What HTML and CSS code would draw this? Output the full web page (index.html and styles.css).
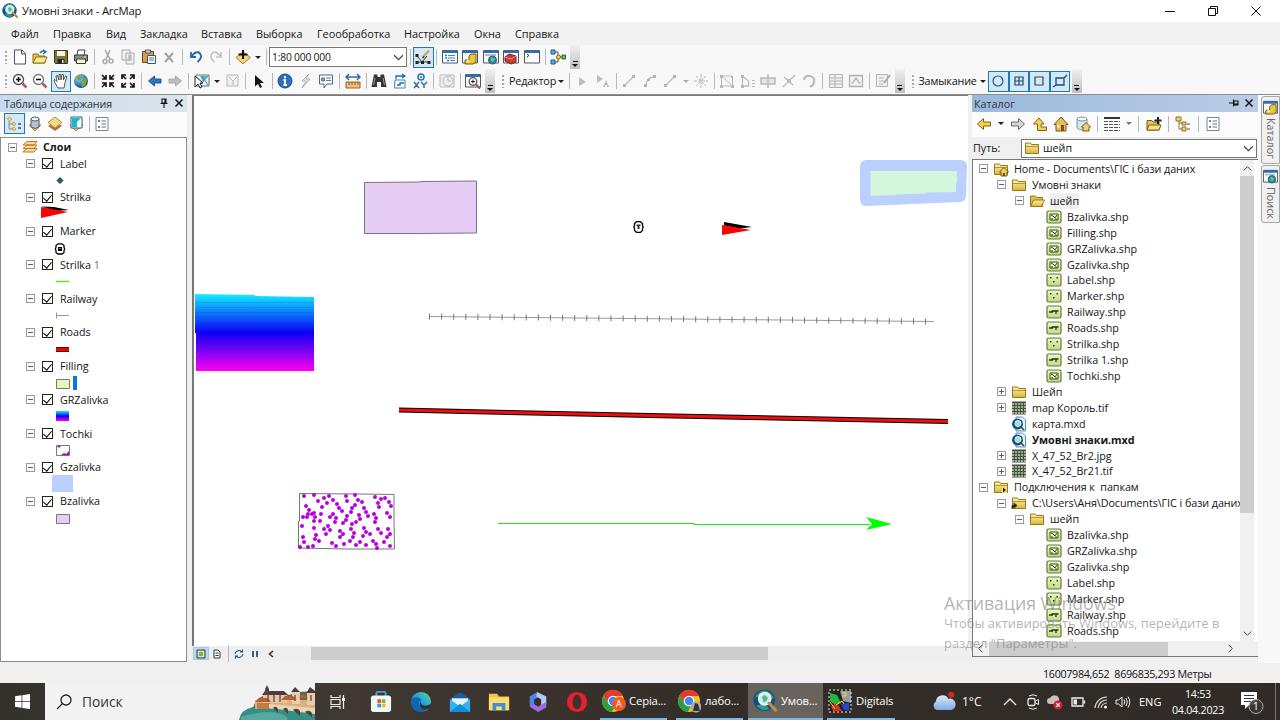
FILE: index.html
```html
<!DOCTYPE html>
<html lang="uk">
<head>
<meta charset="utf-8">
<title>Умовні знаки - ArcMap</title>
<link rel="stylesheet" href="styles.css">
</head>
<body>
<svg class="defs" width="0" height="0">
<defs>
<linearGradient id="gFold" x1="0" y1="0" x2="0" y2="1"><stop offset="0" stop-color="#fff3a8"/><stop offset="1" stop-color="#d9b638"/></linearGradient>
<linearGradient id="gShp" x1="0" y1="0" x2="0" y2="1"><stop offset="0" stop-color="#f0f8c4"/><stop offset="1" stop-color="#bfd888"/></linearGradient>
<linearGradient id="gRamp" x1="0" y1="0" x2="0" y2="1"><stop offset="0" stop-color="#10f0ff"/><stop offset=".5" stop-color="#0a00f4"/><stop offset="1" stop-color="#ff00f0"/></linearGradient>
<linearGradient id="gEdge" x1="0" y1="1" x2="1" y2="0"><stop offset="0" stop-color="#0c59a4"/><stop offset=".5" stop-color="#1b9de2"/><stop offset="1" stop-color="#5fe08a"/></linearGradient>
<linearGradient id="gCloud" x1="0" y1="0" x2="0" y2="1"><stop offset="0" stop-color="#dce9fb"/><stop offset="1" stop-color="#7ea9e6"/></linearGradient>
<radialGradient id="gGlobe" cx=".35" cy=".3" r=".8"><stop offset="0" stop-color="#b9e4f6"/><stop offset=".5" stop-color="#3d86c8"/><stop offset="1" stop-color="#0f3874"/></radialGradient>
</defs>
<symbol id="arcmap" viewBox="0 0 16 16"><circle cx="7.5" cy="7.5" r="7.2" fill="#114f7c"/><path d="M1 6q3-5 6-5 5 0 7 5l-4 1-4-3zM2 11q5 5 9 2l-4-3z" fill="#2e9c8d"/><circle cx="7.8" cy="6.5" r="4" fill="#c8ecf0" stroke="#e8f4f6" stroke-width="1.2"/><path d="M6 5l2-1 2 2-1 2-2 1z" fill="#58b78d"/><path d="M10.8 9.5l4.2 4.6" stroke="#c38b3e" stroke-width="2.2" stroke-linecap="round"/></symbol>
<symbol id="new" viewBox="0 0 16 16"><path d="M2.5 1h7.500l3.500 3.500V15h-11z" fill="#fdfeff" stroke="#4b5563"/><path d="M9.500 1v4h4" fill="#dfe7f0" stroke="#4b5563"/></symbol>
<symbol id="open" viewBox="0 0 16 16"><path d="M1 14V5h5l1 2h6v7z" fill="#e3c34e" stroke="#8d7219"/><path d="M1 14l3-6h11l-2.500 6z" fill="#fbe992" stroke="#8d7219"/><path d="M8 4q2-3 5-1.500M11 0.800l3 2-3 2" fill="none" stroke="#3173ae" stroke-width="1.400"/></symbol>
<symbol id="save" viewBox="0 0 16 16"><path d="M1.500 1.500h13v13h-12l-1-1z" fill="#7e7632" stroke="#37351c"/><path d="M4 2h8v5H4z" fill="#f6f4df"/><path d="M4.500 10h7v4.500h-7z" fill="#26272a"/><path d="M9 11h1.500v3H9z" fill="#eee"/></symbol>
<symbol id="print" viewBox="0 0 16 16"><path d="M4 6l1-5h7l-1 5" fill="#fff" stroke="#444"/><path d="M1.500 6h13v6h-13z" fill="#8b9182" stroke="#343a35"/><path d="M3.500 10h9v4.500h-9z" fill="#f5f4dd" stroke="#343a35"/><path d="M11 8h2" stroke="#ddeb83"/></symbol>
<symbol id="cut" viewBox="0 0 16 16"><path d="M5 1l5 9M10 1L6 10" stroke="#a4a4a4" stroke-width="1.500"/><circle cx="5" cy="12.500" r="2" fill="none" stroke="#aaa" stroke-width="1.500"/><circle cx="11" cy="12" r="2" fill="none" stroke="#aaa" stroke-width="1.500"/></symbol>
<symbol id="copy" viewBox="0 0 16 16"><path d="M2 1h8v10H2zM6 4h8v11H6z" fill="#f2f2f2" stroke="#a9a9a9"/><path d="M8 7h4M8 9h4M8 11h4" stroke="#aaa"/></symbol>
<symbol id="paste" viewBox="0 0 16 16"><path d="M1.500 2.500h11v11h-11z" fill="#d99a4d" stroke="#744714"/><path d="M4.500 1h5v3h-5z" fill="#d5d3cd" stroke="#555"/><path d="M6.500 6.500h8v8h-8z" fill="#fff" stroke="#3d5370"/><path d="M8 9h5M8 11h5" stroke="#4378ae"/></symbol>
<symbol id="del" viewBox="0 0 16 16"><path d="M4 4l8 9M12 4l-8 9" stroke="#a1a1a1" stroke-width="2"/></symbol>
<symbol id="undo" viewBox="0 0 16 16"><path d="M3 3v5h5" fill="none" stroke="#2569aa" stroke-width="1.800"/><path d="M3.500 7.500Q7 2 11 3.500q5 4-1.500 9.500" fill="none" stroke="#2569aa" stroke-width="2"/></symbol>
<symbol id="redo" viewBox="0 0 16 16"><path d="M13 3v5H8M12.500 7.500Q9 2 5 3.500q-5 4 1.500 9.500" fill="none" stroke="#c4c4c4" stroke-width="1.700"/></symbol>
<symbol id="adddata" viewBox="0 0 16 16"><path d="M1 8.500L8 3l7.500 5.500L8 14.800z" fill="#f4d478" stroke="#9e8129"/><path d="M8 1v9M3.500 5.500h9" stroke="#101010" stroke-width="2"/></symbol>
<symbol id="edit" viewBox="0 0 16 16"><path d="M2 7l5 6 5-6M2 13h12" stroke="#333" fill="none"/><path d="M.5 5h3v3h-3zM.5 12h3v3h-3zM6 12h3v3H6zM12.500 12h3v3h-3z" fill="#222"/><path d="M8.500 7.500l5.500-6" stroke="#c9a94a" stroke-width="2.200"/><path d="M7.500 9l1.500-1.500" stroke="#222" stroke-width="1.500"/></symbol>
<symbol id="win" viewBox="0 0 16 16"><path d="M.5 1.500h15v12.500H.5z" fill="#fbfcfd" stroke="#4f5865"/><path d="M1 1h14v3H1z" fill="#386ba6"/></symbol>
<symbol id="toc" viewBox="0 0 16 16"><use href="#win"/><path d="M3 6.500h2M3 9h2M5 11.500h2" stroke="#287bc0" stroke-width="1.500"/><path d="M6 6.500h7M6 9h7M8 11.500h5" stroke="#4488ba"/></symbol>
<symbol id="catalog" viewBox="0 0 16 16"><use href="#win"/><path d="M9 5h5v8l-3 2H3v-4h4V7z" fill="#eac638" stroke="#725b13"/><circle cx="6" cy="12" r="1.500" fill="#fff09d"/></symbol>
<symbol id="search" viewBox="0 0 16 16"><use href="#win"/><path d="M2 6h11" stroke="#abc0d0" stroke-width="2"/><circle cx="9.500" cy="11" r="4" fill="#258ba6" stroke="#27647d"/><path d="M8 8l4 2-2 3-2-1z" fill="#77c375"/></symbol>
<symbol id="toolbox" viewBox="0 0 16 16"><use href="#win"/><path d="M2 8l4-3 7 2v6l-5 2-6-3z" fill="#c93d30" stroke="#7c221b"/><path d="M2 8l6 2 5-3" fill="none" stroke="#f29a83"/></symbol>
<symbol id="python" viewBox="0 0 16 16"><use href="#win"/><path d="M3 5l2 1.500L3 8" stroke="#333" fill="none"/></symbol>
<symbol id="model" viewBox="0 0 16 16"><path d="M5 3h3v10H5M8 8h5" fill="none" stroke="#555"/><path d="M1 1h4v4H1zM1 11h4v4H1z" fill="#5fb0e8" stroke="#175589"/><circle cx="8.500" cy="8" r="2" fill="#f4d549" stroke="#7e6915"/><path d="M12 6h3.500v4H12z" fill="#6fb966" stroke="#2c6e28"/></symbol>
<symbol id="zin" viewBox="0 0 16 16"><circle cx="6.500" cy="6.500" r="5" fill="#fff" stroke="#4d4d4d" stroke-width="1.300"/><path d="M4 6.500h5M6.500 4v5" stroke="#111" stroke-width="1.600"/><path d="M10.500 10.500l4 4" stroke="#a6615d" stroke-width="2.500"/></symbol>
<symbol id="zout" viewBox="0 0 16 16"><circle cx="6.500" cy="6.500" r="5" fill="#fff" stroke="#777" stroke-width="1.300"/><path d="M4 6.500h5" stroke="#111" stroke-width="1.600"/><path d="M10.500 10.500l4 4" stroke="#a6615d" stroke-width="2.500"/></symbol>
<symbol id="hand" viewBox="0 0 16 16"><path d="M5 15L2 10l-1-3 1-.500 2 2L3 3l1.500-.5L6 7V1.500h1.600L8 7l1-5.500 1.500.3L10.500 7l2-4 1.500.6-2 6-1 5.400z" fill="#fff" stroke="#444" stroke-width=".9"/></symbol>
<symbol id="globe" viewBox="0 0 16 16"><circle cx="8" cy="8" r="7" fill="url(#gGlobe)"/><path d="M3 4l4-2 2 2-1 3-3 1zM9 7l4-3 1 4-2 5-3 1-1-3z" fill="#72a942"/></symbol>
<symbol id="fixin" viewBox="0 0 16 16"><path d="M2 2l4 4M6 2v4H2M14 2l-4 4M10 2v4h4M2 14l4-4M6 14v-4H2M14 14l-4-4M10 14v-4h4" fill="none" stroke="#151515" stroke-width="1.700"/></symbol>
<symbol id="fixout" viewBox="0 0 16 16"><path d="M2 6V2h4M2 2l4 4M10 2h4v4M14 2l-4 4M2 10v4h4M2 14l4-4M10 14h4v-4M14 14l-4-4" fill="none" stroke="#151515" stroke-width="1.700"/></symbol>
<symbol id="left" viewBox="0 0 16 16"><path d="M1.500 8l6-5v3H14v4H7.500v3z" fill="#3273c7" stroke="#215296"/></symbol>
<symbol id="right" viewBox="0 0 16 16"><path d="M14.500 8l-6-5v3H2v4h6.500v3z" fill="#bcbcbc" stroke="#aaa"/></symbol>
<symbol id="sel" viewBox="0 0 16 16"><path d="M2 2h13v11H2z" fill="#e4f3f5" stroke="#607780"/><path d="M6 3h6l2 0-5 6z" fill="#36c5d1"/><path d="M6 12l8-9M8 3l6 9" stroke="#777"/><path d="M1 3v11l3-3 2 4 2-1-2-4h3z" fill="#fff" stroke="#222"/></symbol>
<symbol id="clr" viewBox="0 0 16 16"><path d="M3 2h11v11H3zM5 4l4 4 4-4M9 8v4" fill="#f0f0f0" stroke="#b9b9b9"/></symbol>
<symbol id="arrow" viewBox="0 0 16 16"><path d="M4 2v11.500l3-2.500 2 4 2-1-2-4h4z" fill="#151515"/></symbol>
<symbol id="info" viewBox="0 0 16 16"><circle cx="8" cy="8" r="7" fill="#2d6fbd" stroke="#1a4b86"/><path d="M8 3v2.200M6.500 7H8v5M6.500 12h3.500" fill="none" stroke="#fff" stroke-width="1.900"/></symbol>
<symbol id="bolt" viewBox="0 0 16 16"><path d="M11 1L4 8h4l-4 7 8-9H8z" fill="#e5e5e5" stroke="#b2b2b2"/></symbol>
<symbol id="html" viewBox="0 0 16 16"><path d="M1.500 2h13v9H9l-3 4v-4H1.500z" fill="#fff" stroke="#50697d"/><path d="M3.500 5h3v3h-3zM8 5h5M8 7.500h5" fill="#66a4dc" stroke="#3b80b7"/></symbol>
<symbol id="measure" viewBox="0 0 16 16"><path d="M1 9h14v6H1z" fill="#edbf7b" stroke="#946427"/><path d="M4 9v3M7 9v3M10 9v3M13 9v3" stroke="#8a5b20"/><path d="M1 4h14M4 1L1 4l3 3M12 1l3 3-3 3" stroke="#2a6caf" fill="none" stroke-width="1.500"/></symbol>
<symbol id="bino" viewBox="0 0 16 16"><path d="M3 1.500h3.500V4h3V1.500H13L15.500 14h-5.500V9H6v5H.5z" fill="#343434"/><path d="M4 5L2.500 12M12 5l1.500 7" stroke="#999"/></symbol>
<symbol id="route" viewBox="0 0 16 16"><path d="M3 7h10v8H2.500z" fill="#f6fafc" stroke="#4687b2"/><path d="M4 6V3h8M10 1l3 2-3 2M5 12h3v-2h4" stroke="#226da8" fill="none" stroke-width="1.300"/></symbol>
<symbol id="xy" viewBox="0 0 16 16"><circle cx="9" cy="4" r="3" fill="#e5f2fa" stroke="#2b74aa" stroke-width="1.500"/><circle cx="9" cy="4" r="1" fill="#2b74aa"/><path d="M2 9l5 6M7 9l-5 6M9 9l3 3 3-3M12 12v3" stroke="#2b74aa" fill="none" stroke-width="1.500"/></symbol>
<symbol id="time" viewBox="0 0 16 16"><path d="M1 2h14v12H1z" fill="#eee" stroke="#bcbcbc"/><circle cx="9" cy="8" r="5" fill="#eee" stroke="#bbb"/><path d="M9 4v4h3" stroke="#b5b5b5" fill="none"/></symbol>
<symbol id="viewer" viewBox="0 0 16 16"><use href="#win"/><circle cx="8" cy="8.500" r="3.800" fill="#fff" stroke="#555" stroke-width="1.300"/><path d="M6 8.500h4M8 6.500v4" stroke="#222"/><path d="M11 11.500l4 4" stroke="#985b56" stroke-width="2"/></symbol>
<symbol id="g-arrow" viewBox="0 0 16 16"><path d="M5 4v9l7-4z" fill="#bdbdbd"/></symbol>
<symbol id="g-arrowA" viewBox="0 0 16 16"><path d="M2 2v8l6-4zM8 14l3-7 3 7h-2v-2h-2v2z" fill="#bdbdbd"/></symbol>
<symbol id="g-line" viewBox="0 0 16 16"><path d="M4 12l8-8" stroke="#c0c0c0" stroke-width="1.500"/><path d="M2 11h3v3H2zM11 2h3v3h-3z" fill="#b5b5b5"/></symbol>
<symbol id="g-arc" viewBox="0 0 16 16"><path d="M4 12Q5 4 12 4" fill="none" stroke="#c0c0c0" stroke-width="1.500"/><path d="M2 11h3v3H2zM11 2h3v3h-3zM5 6h3v2H5z" fill="#b5b5b5"/></symbol>
<symbol id="g-star" viewBox="0 0 16 16"><path d="M8 1v14M1 8h14M3 3l10 10M13 3L3 13" stroke="#b8b8b8" stroke-dasharray="3 1"/></symbol>
<symbol id="g-poly" viewBox="0 0 16 16"><path d="M2.500 3v10h11zM13.500 3v10M2.500 3h11" fill="none" stroke="#bcbcbc"/><path d="M1 2h3v3H1zM1 12h3v3H1zM12 12h3v3h-3zM12 3h2v2h-2z" fill="#b8b8b8"/></symbol>
<symbol id="g-reshape" viewBox="0 0 16 16"><path d="M2.500 3v10h6V8z" fill="none" stroke="#bcbcbc" stroke-width="1.300"/><path d="M1 2h3v3H1zM1 12h3v3H1z" fill="#b8b8b8"/><path d="M12 7.500h3M12 10.500h3M12 13.500h3" stroke="#bbb"/></symbol>
<symbol id="g-cut" viewBox="0 0 16 16"><path d="M1 5h14v6H1zM8 1v14" fill="#e5e5e5" stroke="#b9b9b9" stroke-width="1.500"/></symbol>
<symbol id="g-split" viewBox="0 0 16 16"><path d="M2 14L14 2M3 4l9 8" stroke="#bbb" stroke-width="1.200"/><path d="M6 6h4v4H6z" fill="#bbb"/></symbol>
<symbol id="g-rot" viewBox="0 0 16 16"><path d="M3 7q1-5 6-4t4 6-4 4M12 12l-3 2" fill="none" stroke="#bcbcbc" stroke-width="2.200"/></symbol>
<symbol id="g-table" viewBox="0 0 16 16"><path d="M1.500 1.500h13v13h-13zM1.500 5h13M1.500 8h13M1.500 11h13M7 2v12" fill="#f0f0f0" stroke="#b5b5b5"/></symbol>
<symbol id="g-sketch" viewBox="0 0 16 16"><path d="M1.500 2.500h13v11h-13zM4 11l4-6 4 6" fill="#f0f0f0" stroke="#b0b0b0" stroke-width="1.300"/></symbol>
<symbol id="g-create" viewBox="0 0 16 16"><path d="M1.500 1.500h11v12h-11zM4 5h5M4 8h5M4 11h4" fill="#f0f0f0" stroke="#b6b6b6"/><path d="M9 10l6-8" stroke="#a9a9a9" stroke-width="2"/></symbol>
<symbol id="s-pt" viewBox="0 0 16 16"><circle cx="8" cy="8" r="5" fill="none" stroke="#24577f" stroke-width="1.200"/></symbol>
<symbol id="s-end" viewBox="0 0 16 16"><path d="M4 4h8v8H4zM8 4v8M4 8h8" fill="none" stroke="#24496b" stroke-width="1.200"/></symbol>
<symbol id="s-vtx" viewBox="0 0 16 16"><path d="M4 4h8v8H4z" fill="none" stroke="#24496b" stroke-width="1.200"/></symbol>
<symbol id="s-edge" viewBox="0 0 16 16"><path d="M4 5h8v7H4zM1 14l3-2M12 5l3-3" fill="none" stroke="#24496b" stroke-width="1.300"/></symbol>
<symbol id="t-order" viewBox="0 0 16 16"><path d="M3 5v8h6M3 8h6" stroke="#888" fill="none"/><path d="M1 2.500l2.500-1.500L6 3 4 5.500zM6 7l2-1 2 2-2 2zM6 12l2-1 2 2-2 2z" fill="#f3cc6b" stroke="#c18b29" stroke-width=".6"/><path d="M12 8h3M12 12h3" stroke="#315b8c" stroke-width="1.500"/></symbol>
<symbol id="cyl" viewBox="0 0 16 16"><path d="M2 9l6 6 6-6z" fill="#f3cc6b" stroke="#bd9137"/><path d="M4 3v8q4 3 8 0V3z" fill="#b9c3cd" stroke="#4f5d6c"/><ellipse cx="8" cy="3" rx="4" ry="2" fill="#edf4f7" stroke="#4f5d6c"/></symbol>
<symbol id="diam" viewBox="0 0 16 16"><path d="M1 10l7-5 7 5-7 5z" fill="#9e7b3c"/><path d="M1 6.500L8 1l7 5.500L8 12z" fill="#f8d888" stroke="#b48b39"/></symbol>
<symbol id="t-sel" viewBox="0 0 16 16"><path d="M2 9l6 6 7-6z" fill="#f5d180" stroke="#ac833b"/><path d="M3 1h11v11H3z" fill="#fff" stroke="#35576f"/><path d="M4 2h9L9 6v5H4z" fill="#1ab9c9"/></symbol>
<symbol id="opts" viewBox="0 0 16 16"><path d="M2 1.500h12v13H2z" fill="#fff" stroke="#798591"/><circle cx="5" cy="5" r="1" fill="#3d5369"/><circle cx="5" cy="11" r="1" fill="#3d5369"/><path d="M7.500 5H12M7.500 8H12M7.500 11H12" stroke="#5b7387"/></symbol>
<symbol id="layers" viewBox="0 0 16 16"><path d="M1 13l4-3.500h10L12 13zM1 9.500L5 6h10l-3 3.500zM1 6l4-3.500h10L12 6z" fill="#f7d99a" stroke="#b47b2a"/></symbol>
<symbol id="folder" viewBox="0 0 16 16"><path d="M1.500 13.500V3h5l1 1.500h7v9z" fill="url(#gFold)" stroke="#96791e"/><path d="M2 6.500h12" stroke="#b69738"/></symbol>
<symbol id="folder-open" viewBox="0 0 16 16"><path d="M1.500 13.500V3h5l1 1.500h6v9z" fill="#dfbf4f" stroke="#96791e"/><path d="M1.500 13.500l3-6.500H15.500l-3 6.500z" fill="url(#gFold)" stroke="#96791e"/></symbol>
<symbol id="folder-home" viewBox="0 0 16 16"><use href="#folder"/><path d="M6.500 11L11 6.500 15.500 11H14v4H8v-4z" fill="#f0d171" stroke="#735711"/><path d="M10 12h2v3h-2z" fill="#6e4c18"/></symbol>
<symbol id="folder-link" viewBox="0 0 16 16"><use href="#folder"/><path d="M9 8h5v6H9z" fill="#f5e184"/><path d="M10 8.500l3 2.500-3 2.500z" fill="#202020"/></symbol>
<symbol id="folder-conn" viewBox="0 0 16 16"><use href="#folder"/><path d="M1 14v-3.500h3M3 8l3 2.500L3 13z" fill="#222" stroke="#222" stroke-width=".8"/></symbol>
<symbol id="shp" viewBox="0 0 16 16"><rect x="1" y="2" width="14" height="12" rx="1.500" fill="url(#gShp)" stroke="#617b34" stroke-width="1.200"/></symbol>
<symbol id="shp-poly" viewBox="0 0 16 16"><use href="#shp"/><path d="M4 5h8v6H4z" fill="#f0fad0" stroke="#3a4d21"/><path d="M5 6l2 1 2 2 2-3M5 10h2M10 9v2" stroke="#304b1f" fill="none"/></symbol>
<symbol id="shp-pt" viewBox="0 0 16 16"><use href="#shp"/><path d="M4 5h1.500v1.500H4zM10.500 5H12v1.500h-1.500zM7 9h1.500v1.500H7z" fill="#263818"/></symbol>
<symbol id="shp-line" viewBox="0 0 16 16"><use href="#shp"/><path d="M3 8h4M5.500 7h7M10 7v3" stroke="#22351b" fill="none" stroke-width="1.300"/></symbol>
<symbol id="raster" viewBox="0 0 16 16"><rect x="1" y="1.500" width="14" height="13" fill="#435046"/><path d="M1 4h14M1 7h14M1 10h14M1 13h14" stroke="#c8d9a5" stroke-width="1.300" stroke-dasharray="2 1"/></symbol>
<symbol id="mxd" viewBox="0 0 16 16"><path d="M5 1h6.500l3 3v11H5z" fill="#e6f4ff" stroke="#588fb8"/><circle cx="6.500" cy="8" r="5.500" fill="#14567f"/><circle cx="7" cy="7.500" r="3" fill="#a3dadf" stroke="#e3f4f5"/><path d="M9 10l4 4" stroke="#39434d" stroke-width="1.600"/></symbol>
<symbol id="c-left" viewBox="0 0 16 16"><path d="M1.500 8l6-5.500v3.500h7v4h-7v3.500z" fill="#f6d24d" stroke="#826514"/></symbol>
<symbol id="c-right" viewBox="0 0 16 16"><path d="M14.500 8l-6-5.500v3.500h-7v4h7v3.500z" fill="#d7d7d7" stroke="#686868"/></symbol>
<symbol id="c-up" viewBox="0 0 16 16"><path d="M1.500 8L7 2l5 6H9v3h5.500v3.500H5.500V8z" fill="#f7d44f" stroke="#826514"/></symbol>
<symbol id="home" viewBox="0 0 16 16"><path d="M1 8.500L8 1l7 7.500h-2V15H3V8.500z" fill="#ebbc55" stroke="#7d591c"/><path d="M8 9h3v6H8z" fill="#785323"/><path d="M4 9h2.500v2.500H4z" fill="#fff4c1"/></symbol>
<symbol id="dbhome" viewBox="0 0 16 16"><path d="M2 3v9q5 4 10 0V3z" fill="#d4e3ee" stroke="#7d93a2"/><ellipse cx="7" cy="3" rx="5" ry="2" fill="#f7fbff" stroke="#7d93a2"/><path d="M6.500 11L11 6.500l4.500 4.500H14v4H8v-4z" fill="#f0d171" stroke="#735711"/></symbol>
<symbol id="grid" viewBox="0 0 16 16"><path d="M0 2h16" stroke="#333" stroke-width="2"/><path d="M0 5.500h16M0 8.500h16M0 11.500h16M0 14.500h16" stroke="#555" stroke-width="1.200" stroke-dasharray="4 1"/></symbol>
<symbol id="connect" viewBox="0 0 16 16"><path d="M1 14V4.500h5l1 1.500h6v8z" fill="#e9c553" stroke="#785d18"/><path d="M1 14l2-5h12l-2 5z" fill="#f8e28a" stroke="#785d18"/><path d="M12 1v7M8.500 4.500h7" stroke="#222" stroke-width="2"/></symbol>
<symbol id="ctree" viewBox="0 0 16 16"><path d="M4 5v8h4M4 7h4" fill="none" stroke="#777"/><path d="M1 1h5v4H1zM7 6h4v3H7zM7 11h4v4H7z" fill="#f3d25b" stroke="#927020"/><path d="M12 8h3M12 13h3" stroke="#315b8c"/></symbol>
<symbol id="pin" viewBox="0 0 10 10"><path d="M3 1h4v4H3zM1.500 5.500h7M5 5.500V10M6 1v4" fill="none" stroke="#111" stroke-width="1.100"/></symbol>
<symbol id="x" viewBox="0 0 10 10"><path d="M1.500 1.500l7 7M8.500 1.500l-7 7" stroke="#111" stroke-width="1.500"/></symbol>
<symbol id="chev" viewBox="0 0 10 10"><path d="M1 3l4 4 4-4" fill="none" stroke="#444" stroke-width="1.100"/></symbol>
<symbol id="chrome" viewBox="0 0 24 24"><circle cx="12" cy="12" r="11" fill="#fbc116"/><path d="M2.500 6.500A11 11 0 0 1 22 7H12L7 14z" fill="#e33b2e"/><path d="M2.500 6.500A11 11 0 0 0 11 23l4-9H7z" fill="#28a048"/><circle cx="12" cy="12" r="5.300" fill="#fff"/><circle cx="12" cy="12" r="4.200" fill="#4285f4"/></symbol>
</svg>

<header class="title"><svg class="i"><use href="#arcmap"/></svg><span>Умовні знаки - ArcMap</span>
<div class="winbtns"><svg viewBox="0 0 10 10"><path d="M0 5.500h10" stroke="#111"/></svg><svg viewBox="0 0 10 10"><path d="M.5 2.500h7v7h-7zM2.500 2.500v-2h7v7h-2" fill="none" stroke="#111"/></svg><svg viewBox="0 0 10 10"><path d="M.5.5l9 9M9.500.5l-9 9" stroke="#111"/></svg></div></header>
<nav class="menu"><span>Файл</span><span>Правка</span><span>Вид</span><span>Закладка</span><span>Вставка</span><span>Выборка</span><span>Геообработка</span><span>Настройка</span><span>Окна</span><span>Справка</span></nav>

<div class="bar bar1"><i class="grip"></i>
<b><svg><use href="#new"/></svg></b><b><svg><use href="#open"/></svg></b><b><svg><use href="#save"/></svg></b><b><svg><use href="#print"/></svg></b><i class="sep"></i>
<b><svg><use href="#cut"/></svg></b><b><svg><use href="#copy"/></svg></b><b><svg><use href="#paste"/></svg></b><b><svg><use href="#del"/></svg></b><i class="sep"></i>
<b><svg><use href="#undo"/></svg></b><b><svg><use href="#redo"/></svg></b><i class="sep"></i><b><svg><use href="#adddata"/></svg></b><i class="dd"></i><i class="sep"></i>
<div class="combo"><span>1:80 000 000</span><svg><use href="#chev"/></svg></div><i class="sep"></i>
<b class="on"><svg><use href="#edit"/></svg></b><i class="sep"></i><b><svg><use href="#toc"/></svg></b><b><svg><use href="#catalog"/></svg></b><b><svg><use href="#search"/></svg></b><b><svg><use href="#toolbox"/></svg></b><b><svg><use href="#python"/></svg></b><i class="sep"></i><b><svg><use href="#model"/></svg></b><i class="more"></i></div>

<div class="bar bar2"><i class="grip"></i>
<b><svg><use href="#zin"/></svg></b><b><svg><use href="#zout"/></svg></b><b class="on"><svg><use href="#hand"/></svg></b><b><svg><use href="#globe"/></svg></b><i class="sep"></i><b><svg><use href="#fixin"/></svg></b><b><svg><use href="#fixout"/></svg></b><i class="sep"></i><b><svg><use href="#left"/></svg></b><b><svg><use href="#right"/></svg></b><i class="sep"></i><b><svg><use href="#sel"/></svg></b><i class="dd"></i><b><svg><use href="#clr"/></svg></b><i class="sep"></i><b><svg><use href="#arrow"/></svg></b><i class="sep"></i><b><svg><use href="#info"/></svg></b><b><svg><use href="#bolt"/></svg></b><b><svg><use href="#html"/></svg></b><i class="sep"></i><b><svg><use href="#measure"/></svg></b><i class="sep"></i><b><svg><use href="#bino"/></svg></b><b><svg><use href="#route"/></svg></b><b><svg><use href="#xy"/></svg></b><i class="sep"></i><b><svg><use href="#time"/></svg></b><i class="sep"></i><b><svg><use href="#viewer"/></svg></b><i class="more"></i>
<i class="grip"></i><span class="lbl l1">Редактор</span><i class="dd"></i><i class="sep"></i><b><svg><use href="#g-arrow"/></svg></b><b><svg><use href="#g-arrowA"/></svg></b><i class="sep"></i><b><svg><use href="#g-line"/></svg></b><b><svg><use href="#g-arc"/></svg></b><b><svg><use href="#g-line"/></svg></b><i class="dd grey"></i><b><svg><use href="#g-star"/></svg></b><i class="sep"></i><b><svg><use href="#g-poly"/></svg></b><b><svg><use href="#g-reshape"/></svg></b><b><svg><use href="#g-cut"/></svg></b><b><svg><use href="#g-split"/></svg></b><b><svg><use href="#g-rot"/></svg></b><i class="sep"></i><b><svg><use href="#g-table"/></svg></b><b><svg><use href="#g-sketch"/></svg></b><i class="sep"></i><b><svg><use href="#g-create"/></svg></b><i class="more"></i>
<i class="grip"></i><span class="lbl l2">Замыкание</span><i class="dd"></i><b class="on"><svg><use href="#s-pt"/></svg></b><b class="on"><svg><use href="#s-end"/></svg></b><b class="on"><svg><use href="#s-vtx"/></svg></b><b class="on"><svg><use href="#s-edge"/></svg></b><i class="more"></i></div>

<main class="work">
<section class="toc">
<div class="phead"><span>Таблица содержания</span><svg><use href="#pin"/></svg><svg><use href="#x"/></svg></div>
<div class="ptools"><b class="on"><svg><use href="#t-order"/></svg></b><b><svg><use href="#cyl"/></svg></b><b><svg><use href="#diam"/></svg></b><b><svg><use href="#t-sel"/></svg></b><i class="sep"></i><b><svg><use href="#opts"/></svg></b></div>
<div class="list">
<div class="root"><i class="pm"></i><svg class="i"><use href="#layers"/></svg><strong>Слои</strong></div>
<div class="ly"><p><i class="pm"></i><i class="cb"></i>Label</p><svg viewBox="0 0 60 17"><path d="M21 6.500l3 3-3 3-3-3z" fill="#17706e" stroke="#111" stroke-width=".8"/></svg></div>
<div class="ly"><p><i class="pm"></i><i class="cb"></i>Strilka</p><svg viewBox="0 0 60 17"><path d="M2 1.500l13 .5 15 3-13 1z" fill="#000"/><path d="M2 2l27 5L2 13z" fill="#f00"/></svg></div>
<div class="ly"><p><i class="pm"></i><i class="cb"></i>Marker</p><svg viewBox="0 0 60 17"><path d="M19 4.800h4l2 1.700v2l.7 1.500-.7 1.500v2l-2 1.500h-4l-2-1.500v-2l-.7-1.500.7-1.500v-2z" fill="#fff" stroke="#000" stroke-width="1.300"/><path d="M19 8h4v4h-4z" fill="#000"/><path d="M20.500 9h1v1h-1z" fill="#fff"/></svg></div>
<div class="ly"><p><i class="pm"></i><i class="cb"></i>Strilka <span class="one">1</span></p><svg viewBox="0 0 60 17"><path d="M17 9.500h13v.01" fill="none" stroke="#62e02c" stroke-width="1.300"/></svg></div>
<div class="ly"><p><i class="pm"></i><i class="cb"></i>Railway</p><svg viewBox="0 0 60 17"><path d="M17.500 6.500v6M17 9.500h13" stroke="#999"/></svg></div>
<div class="ly"><p><i class="pm"></i><i class="cb"></i>Roads</p><svg viewBox="0 0 60 17"><path d="M17 9.500h13" stroke="#6e0000" stroke-width="5"/><path d="M17 9.500h13" stroke="#e00b0b" stroke-width="3"/></svg></div>
<div class="ly"><p><i class="pm"></i><i class="cb"></i>Filling</p><svg viewBox="0 0 60 17"><path d="M17.500 5.500h13v9h-13z" fill="#e2fbb8" stroke="#777"/><path d="M34 2h4v14h-4z" fill="#0a78d4"/></svg></div>
<div class="ly"><p><i class="pm"></i><i class="cb"></i>GRZalivka</p><svg viewBox="0 0 60 17"><path d="M17 4h13v10H17z" fill="url(#gRamp)"/></svg></div>
<div class="ly"><p><i class="pm"></i><i class="cb"></i>Tochki</p><svg viewBox="0 0 60 17"><path d="M17.500 4.500h13v10h-13z" fill="#fff" stroke="#777"/><path d="M18 5h4l-2 2zM22 14l3-2 2 1 3-3v4z" fill="#b100db"/></svg></div>
<div class="ly"><p><i class="pm"></i><i class="cb"></i>Gzalivka</p><svg viewBox="0 0 60 17"><path d="M14 0h20v15l1 2H13V2z" fill="#bcd0ff"/></svg></div>
<div class="ly"><p><i class="pm"></i><i class="cb"></i>Bzalivka</p><svg viewBox="0 0 60 17"><path d="M17.500 5.500h13v9h-13z" fill="#e6cdf5" stroke="#777"/></svg></div>
</div>
</section>

<section class="map">
<svg class="canvas" viewBox="194 96 774 550">
<path d="M364.500 182.500L421 182v-.5l55.500-.5v52l-56 .5h-56z" fill="#e6cdf5" stroke="#777"/>
<path d="M195 294l60 1v1l59 1v74H196v-38h-1z" fill="url(#gRamp)"/>
<path d="M195 302.500h119M195 307.500h119M195 312.500h119M195 317.500h119M195 322.500h119M195 327.500h119M195 342.500h119M195 347.500h119M195 352.500h119M195 357.500h119" stroke="#2030ff" stroke-opacity=".2"/>
<path d="M429 316.500l252 2.500 253 2.500" stroke="#999" fill="none"/>
<path d="M429 316.500l252 2.500 253 2.500" stroke="#777" fill="none" stroke-width="6" stroke-dasharray="1 11.100"/>
<path d="M399 410l275 6 274 5.500" stroke="#000" stroke-width="5" fill="none"/><path d="M399 410l275 6 274 5.500" stroke="#f00d0d" stroke-width="3" fill="none"/>
<path d="M498 523.500h196v1h176" stroke="#19ee19" stroke-width="1.200" fill="none"/><path d="M866 517l26 7-26 6 6-6z" fill="#0f0"/>
<path d="M636.500 221.700h4l2 1.800v2l.7 1.500-.7 1.500v2l-2 1.800h-4l-2-1.800v-2l-.7-1.500.7-1.500v-2z" fill="#fff" stroke="#000" stroke-width="1.300"/><path d="M636.500 224.500h4v1.500h-1v3h-2v-3h-1z" fill="#333"/>
<path d="M724 222l28 5-12 1.500-16-3z" fill="#000"/><path d="M722 225l29 5-29 5z" fill="#f00"/>
<path d="M866 166h95l-1 30-94 4z" fill="#bcd0ff" stroke="#bcd0ff" stroke-width="12" stroke-linejoin="round"/><path d="M870.500 171H957v11l-1 1v9l-30 .5v1l-30 1v.5l-25.500 1z" fill="#d3f6dc"/>
<path d="M299.500 493.500l60 .5 34.500.5v26l.5 28.500H346l-47.500-1v-27h1z" fill="#fff" stroke="#777"/>
<path d="M304 496h0M314 495h0M318 501h0M306 506h0M309 510h0M312 514h0M307 517h0M303 517h0M308 514h0M314 513h0M315 517h0M314 521h0M302 526h0M314 528h0M303 537h0M304 542h0M316 535h0M315 539h0M300 547h0M308 547h0M313 546h0M319 541h0M320 521h0M324 498h0M329 496h0M333 500h0M346 496h0M347 501h0M355 495h0M358 500h0M362 502h0M375 497h0M381 499h0M385 498h0M322 507h0M327 503h0M337 504h0M339 508h0M342 511h0M352 508h0M355 505h0M351 512h0M364 508h0M366 512h0M368 516h0M378 503h0M379 507h0M389 502h0M391 506h0M330 517h0M333 514h0M336 518h0M335 522h0M347 516h0M346 520h0M343 523h0M359 515h0M360 519h0M356 522h0M374 514h0M376 518h0M375 522h0M387 513h0M390 517h0M324 529h0M328 526h0M330 530h0M326 534h0M340 531h0M343 534h0M340 537h0M351 529h0M354 533h0M353 537h0M350 541h0M364 528h0M366 532h0M363 536h0M370 534h0M378 529h0M381 533h0M388 529h0M390 534h0M387 537h0M332 543h0M336 546h0M344 544h0M356 545h0M360 542h0M366 545h0M373 541h0M376 544h0M377 548h0M384 542h0M390 546h0M352 524h0M321 514h0" stroke="#b600e0" stroke-width="4" stroke-linecap="round"/>
</svg>
<div class="hbar"><b class="on"><svg viewBox="0 0 10 10"><path d="M1 1h8v8H1z" fill="#d7eab2" stroke="#333"/><path d="M3 3h4v4H3z" fill="#83ac5f"/></svg></b><b><svg viewBox="0 0 10 10"><path d="M2 1h4l2 2v6H2zM3.500 4h3M3.500 6.500h3" fill="#fff" stroke="#333"/></svg></b><i class="sep"></i><b><svg viewBox="0 0 10 10"><path d="M1 5a4 4 0 0 1 7-2M9 5a4 4 0 0 1-7 2M8.500.5V3H6M1.500 9.500V7H4" fill="none" stroke="#1c4e7e" stroke-width="1.100"/></svg></b><b><svg viewBox="0 0 10 10"><path d="M3 2v6M7 2v6" stroke="#1e4f88" stroke-width="1.800"/></svg></b><b><svg viewBox="0 0 10 10"><path d="M7 2L3.500 5 7 8" fill="none" stroke="#333" stroke-width="1.600"/></svg></b><i class="thumb"></i></div>
</section>

<section class="cat">
<div class="phead"><span>Каталог</span><svg class="side"><use href="#pin"/></svg><svg><use href="#x"/></svg></div>
<div class="ptools"><b><svg><use href="#c-left"/></svg></b><i class="dd"></i><b><svg><use href="#c-right"/></svg></b><b><svg><use href="#c-up"/></svg></b><b><svg><use href="#home"/></svg></b><b><svg><use href="#dbhome"/></svg></b><i class="sep"></i><b><svg><use href="#grid"/></svg></b><i class="dd mid"></i><i class="sep"></i><b><svg><use href="#connect"/></svg></b><i class="sep"></i><b><svg><use href="#ctree"/></svg></b><i class="sep"></i><b><svg><use href="#opts"/></svg></b></div>
<div class="path"><span>Путь:</span><div class="combo"><svg class="i"><use href="#folder"/></svg><span>шейп</span><svg class="c"><use href="#chev"/></svg></div></div>
<div class="tree"><div class="rows">
<p class="d0"><i class="pm"></i><svg><use href="#folder-home"/></svg>Home - Documents\ГІС і бази даних</p>
<p class="d1"><i class="pm"></i><svg><use href="#folder"/></svg>Умовні знаки</p>
<p class="d2"><i class="pm"></i><svg><use href="#folder-open"/></svg><span class="cur">шейп</span></p>
<p class="d3"><svg><use href="#shp-poly"/></svg>Bzalivka.shp</p>
<p class="d3"><svg><use href="#shp-poly"/></svg>Filling.shp</p>
<p class="d3"><svg><use href="#shp-poly"/></svg>GRZalivka.shp</p>
<p class="d3"><svg><use href="#shp-poly"/></svg>Gzalivka.shp</p>
<p class="d3"><svg><use href="#shp-pt"/></svg>Label.shp</p>
<p class="d3"><svg><use href="#shp-pt"/></svg>Marker.shp</p>
<p class="d3"><svg><use href="#shp-line"/></svg>Railway.shp</p>
<p class="d3"><svg><use href="#shp-line"/></svg>Roads.shp</p>
<p class="d3"><svg><use href="#shp-pt"/></svg>Strilka.shp</p>
<p class="d3"><svg><use href="#shp-line"/></svg>Strilka 1.shp</p>
<p class="d3"><svg><use href="#shp-poly"/></svg>Tochki.shp</p>
<p class="d1"><i class="pm plus"></i><svg><use href="#folder"/></svg>Шейп</p>
<p class="d1"><i class="pm plus"></i><svg><use href="#raster"/></svg>map Король.tif</p>
<p class="d1"><i class="pm none"></i><svg><use href="#mxd"/></svg>карта.mxd</p>
<p class="d1"><i class="pm none"></i><svg><use href="#mxd"/></svg><strong>Умовні знаки.mxd</strong></p>
<p class="d1"><i class="pm plus"></i><svg><use href="#raster"/></svg>X_47_52_Br2.jpg</p>
<p class="d1"><i class="pm plus"></i><svg><use href="#raster"/></svg>X_47_52_Br21.tif</p>
<p class="d0"><i class="pm"></i><svg><use href="#folder-link"/></svg>Подключения к&nbsp; папкам</p>
<p class="d1"><i class="pm"></i><svg><use href="#folder-conn"/></svg>C:\Users\Аня\Documents\ГІС і бази даних</p>
<p class="d2"><i class="pm"></i><svg><use href="#folder"/></svg>шейп</p>
<p class="d3"><svg><use href="#shp-poly"/></svg>Bzalivka.shp</p>
<p class="d3"><svg><use href="#shp-poly"/></svg>GRZalivka.shp</p>
<p class="d3"><svg><use href="#shp-poly"/></svg>Gzalivka.shp</p>
<p class="d3"><svg><use href="#shp-pt"/></svg>Label.shp</p>
<p class="d3"><svg><use href="#shp-pt"/></svg>Marker.shp</p>
<p class="d3"><svg><use href="#shp-line"/></svg>Railway.shp</p>
<p class="d3"><svg><use href="#shp-line"/></svg>Roads.shp</p>
</div>
<div class="vs"><svg class="up"><use href="#chev"/></svg><i></i><svg class="dn"><use href="#chev"/></svg></div>
<div class="hs"><svg class="lf"><use href="#chev"/></svg><i></i><svg class="rt"><use href="#chev"/></svg></div>
</div>
</section>
<aside class="tabs"><div class="t1"><svg><use href="#catalog"/></svg><span>Каталог</span></div><div class="t2"><svg><use href="#search"/></svg><span>Поиск</span></div></aside>
</main>
<div class="status"><span>16007984,652&nbsp; 8696835,293 Метры</span></div>

<footer class="task">
<div class="start"><svg viewBox="0 0 16 16"><path d="M0 2.300L7 1.300V7.500H0zM7.800 1.200L16 0v7.500H7.800zM0 8.300h7v6.300l-7-1zM7.800 8.300H16V16l-8.200-1.200z" fill="#fff"/></svg></div>
<div class="find"><svg class="mag" viewBox="0 0 16 16"><circle cx="10" cy="6" r="5" fill="none" stroke="#222" stroke-width="1.300"/><path d="M6.500 9.500L1 15" stroke="#222" stroke-width="1.300"/></svg><span>Поиск</span>
<svg class="art" viewBox="0 0 76 37"><path d="M0 37q1-10 14-13h62v13z" fill="#348f88"/><path d="M2 34q25-8 40-3 8 3 6 6H2z" fill="#55aaa0"/><path d="M14 25q2-9 10-12 14-4 26-1l10-3 16-1v18z" fill="#5d6a3f"/><path d="M16 17h60v9H16z" fill="#dcae80"/><path d="M24 10h24v10H24z" fill="#e4c7a1"/><path d="M23 12l3-4h19l4 4zM52 9l4-5 5 5zM68 9l3-5 5 4v3h-8z" fill="#493a43"/><path d="M26 12V6l2-4 2 4v6z" fill="#57414c"/><path d="M53 9h8v12h-8zM68 10h8v12h-8z" fill="#e9cda8"/><path d="M16 19l4-4h9l3 4zM42 17l4-4h8l3 4zM60 15l3-4 6 4z" fill="#b75e36"/><path d="M18 20h13v6H18z" fill="#c87747"/><path d="M29 12v7M35 12v7M41 12v7M56 12v6M72 12v6" stroke="#765749" stroke-width="1.500"/><path d="M30 21l46 4v6l-46-6z" fill="#ead4b2"/><path d="M34 25q3-3 5 1v4zM44 26q4-3 5 1v4zM54 27q4-3 7 1v5zM66 29q4-3 7 1v4z" fill="#49473d"/></svg></div>
<div class="ic w1"><svg viewBox="0 0 16 16"><path d="M1 1v2.500h9V1M1 15v-2.500h9V15M1 5.500h9v5H1zM13.500 1v14" fill="none" stroke="#eee" stroke-width="1.200"/><path d="M12 4h3v3h-3z" fill="#eee"/></svg></div>
<div class="ic w2"><svg viewBox="0 0 24 24"><path d="M7 6V2.500q0-1.500 1.500-1.500h7Q17 1 17 2.500V6" fill="none" stroke="#38a5e8" stroke-width="2"/><rect x="1" y="5" width="22" height="18" rx="3" fill="#f4f5f6"/><path d="M8 9h4v4H8z" fill="#ed5332"/><path d="M12.800 9h4v4h-4z" fill="#7fba29"/><path d="M8 13.800h4v4H8z" fill="#20a5ea"/><path d="M12.800 13.800h4v4h-4z" fill="#fab914"/></svg></div>
<div class="ic w3"><svg viewBox="0 0 24 24"><circle cx="12" cy="12" r="11" fill="url(#gEdge)"/><path d="M1.500 9Q8 4 13 10q-3 0-3 4 0 5 8 6-4 4-9 2Q1 20 1.500 9z" fill="#1264ad"/><path d="M12 11q-1 5 4 5 5 0 7-3l-1 5q-4 4-9 1-4-3-1-8z" fill="#352f2b"/></svg></div>
<div class="ic w3"><svg viewBox="0 0 24 24"><path d="M1 9l11-8 11 8v4H1z" fill="#13629e"/><path d="M3 8h18v12H3z" fill="#e9f4fb"/><path d="M1 9l11 8 11-8v14H1z" fill="#33b4f2"/><path d="M1 23L12 14l11 9z" fill="#178bd8"/></svg></div>
<div class="ic w3"><svg viewBox="0 0 24 24"><path d="M1 3h9l2 3h11v15H1z" fill="#f5c344"/><path d="M1 7h22v14H1z" fill="#ffdc72"/><path d="M5 21v-8h14v8h-4v-4H9v4z" fill="#3d91d3"/></svg></div>
<div class="ic w3"><svg viewBox="0 0 24 24"><path d="M11 1L3 6v11l5 3V9l7-3z" fill="#4e83e8"/><path d="M11 1l10 5v8l-6 2V9l-5-3z" fill="#b4c9f7"/><path d="M3 17l5-3 4 3 9-5v6l-9 5z" fill="#a06be0"/><path d="M8 9.500l4-2.500 3.500 2.500v5L12 17l-4-2.500z" fill="#362f2b"/></svg></div>
<div class="ic w3"><svg viewBox="0 0 24 24"><circle cx="12" cy="12" r="11" fill="#e81f2e"/><ellipse cx="12" cy="12" rx="4.800" ry="8" fill="#3b332f"/></svg></div>
<div class="app a1"><svg viewBox="0 0 24 24"><use href="#chrome"/></svg><em>A</em><span>Серіа...</span></div>
<div class="app a2"><svg viewBox="0 0 24 24"><use href="#chrome"/><circle cx="19" cy="18" r="5.500" fill="#aaa"/><path d="M16 22l2-8 3 1 2 7z" fill="#333"/></svg><span>лабо...</span></div>
<div class="app a3"><svg viewBox="0 0 16 16"><use href="#arcmap"/></svg><span>Умов...</span></div>
<div class="app a4"><svg viewBox="0 0 24 24"><path d="M1 1h22v22H1z" fill="#222"/><path d="M12 2h11v12l-8-2z" fill="#9a98a0"/><path d="M2 4l7 2 4 8-6 2-5-4z" fill="#27b83b"/><path d="M3 17l6-3 5 8H5z" fill="#d22f22"/><path d="M13 15l8-1v8l-5-1z" fill="#2b49c6"/><path d="M14 4h4v3h-4M8 16l6-4 2 3M2 13l5 7" stroke="#efdc45" fill="none"/><path d="M1 1h22v22H1z" fill="none" stroke="#eee" stroke-dasharray="2 2"/></svg><span>Digitals</span></div>
<div class="tray">
<svg class="cloud" viewBox="0 0 26 22"><path d="M6 20a5 5 0 0 1-1-9 7 7 0 0 1 13-3 6 6 0 0 1 3 12z" fill="url(#gCloud)"/><circle cx="21" cy="4" r="3.200" fill="#d32920"/></svg><span class="deg">1°C</span>
<svg viewBox="0 0 16 16" class="k1"><path d="M2 11l6-6 6 6" fill="none" stroke="#eee" stroke-width="1.400"/></svg>
<svg viewBox="0 0 16 16" class="k2"><rect x="3" y="4.500" width="7" height="7" rx="1.500" fill="none" stroke="#eee" stroke-width="1.300"/><path d="M10.500 7l3-1.500v5l-3-1.500M4 2q4-2.500 8 0M4 14q4 2.500 8 0" fill="none" stroke="#eee"/></svg>
<svg viewBox="0 0 16 16" class="k3"><path d="M3 10a3 3 0 0 1 0-6 5 5 0 0 1 9 0v6z" fill="#c6c1bd"/><circle cx="11" cy="11" r="4.500" fill="#d3202d"/><path d="M9.200 9.200l3.600 3.600M12.800 9.200l-3.600 3.600" stroke="#fff" stroke-width="1.200"/></svg>
<svg viewBox="0 0 16 16" class="k4"><path d="M2 4h11v8H2zM14.500 6.500v3" fill="none" stroke="#eee" stroke-width="1.300"/><path d="M3.500 5.500H7v5H3.500z" fill="#eee"/></svg>
<svg viewBox="0 0 16 16" class="k5"><path d="M2 14A12 12 0 0 1 14 3M5 14a9 9 0 0 1 9-8M8 14a6 6 0 0 1 6-5" fill="none" stroke="#ddd" stroke-width="1.200"/><circle cx="12.500" cy="13" r="1.500" fill="#fff"/></svg>
<svg viewBox="0 0 16 16" class="k6"><path d="M1 6h2.500L7 3v10L3.500 10H1zM9 5.500q1.500 2.500 0 5M11 4q2.500 4 0 8M13 2.500q3.500 5.500 0 11" fill="none" stroke="#eee"/></svg>
<span class="lang">ENG</span><div class="clock"><span>14:53</span><span>04.04.2023</span></div>
<div class="note"><svg viewBox="0 0 24 24"><path d="M1 2h16v13H9l-4 4v-4H1z" fill="#fff"/><path d="M4 5.500h10M4 8.500h10M4 11.500h7" stroke="#333"/><circle cx="16" cy="16.500" r="7" fill="#3b3733" fill-opacity=".9" stroke="#aaa"/></svg><em>1</em></div><i class="peek"></i>
</div>
</footer>
<div class="activate"><div>Активация Windows</div><p>Чтобы активировать Windows, перейдите в<br>раздел "Параметры".</p></div>
</body>
</html>
```
FILE: styles.css
```css
* { box-sizing: border-box; }
body { margin: 0; width: 1280px; height: 720px; overflow: hidden; display: flex; flex-direction: column; position: relative; background: #f0f0f0; color: #151515; font: 10.75px/16px "Open Sans", "Noto Sans", sans-serif; white-space: nowrap; }
p { margin: 0; }
svg { display: block; flex: none; }
.defs { position: absolute; }
.i { width: 16px; height: 16px; }
i, b { flex: none; font-style: normal; }

.title { height: 22px; flex: none; background: #fff; display: flex; align-items: center; padding-left: 2px; gap: 4px; font-size: 11.3px; letter-spacing: -.2px; }
.winbtns { margin-left: auto; display: flex; gap: 33px; padding-right: 19px; }
.winbtns svg { width: 10px; height: 10px; }
.menu { height: 23px; flex: none; background: #f2f2f2; display: grid; grid-template-columns: 42px 53px 34px 61px 55px 61px 87px 70px 41px 60px; padding: 4px 0 0 11px; font-size: 10.9px; letter-spacing: -.05px; }

.bar { flex: none; display: flex; align-items: center; background: #f8f8f8; }
.bar1 { height: 24px; }
.bar2 { height: 26px; border-bottom: 1px solid #8d8d8d; padding-bottom: 1px; }
b { width: 20.5px; height: 21px; display: flex; align-items: center; justify-content: center; }
b svg { width: 16px; height: 16px; }
.on { background: #d5e8f7; border: 1px solid #1b78bd; }
.sep { width: 6px; height: 16px; background: linear-gradient(#b8b8b8, #b8b8b8) center / 1px 100% no-repeat; }
.grip { width: 10px; height: 14px; background: radial-gradient(circle, #a8a8a8 .8px, transparent 1.2px) 2px 0 / 8px 4px; }
.bar1 .grip, .bar2 .grip:first-child { width: 9.5px; }
.dd { width: 10px; height: 16px; display: flex; align-items: center; justify-content: center; }
.dd::after { content: ""; border: 3px solid transparent; border-top-color: #222; border-bottom: 0; }
.dd.grey::after { border-top-color: #aaa; }
.dd.mid::after { border-top-color: #777; }
.more { width: 10px; align-self: stretch; margin-left: 1.5px; background: linear-gradient(#f0f0f0, #c0c0c0); display: flex; flex-direction: column; align-items: center; justify-content: flex-end; padding-bottom: 2px; }
.more::before { content: ""; width: 5px; height: 1px; background: #111; margin-bottom: 2px; }
.more::after { content: ""; border: 3px solid transparent; border-top-color: #111; border-bottom: 0; }
.combo { width: 138px; height: 20px; background: #fff; border: 1px solid #777; display: flex; align-items: center; justify-content: space-between; padding: 0 2px; }
.combo svg:last-child { width: 11px; height: 11px; }
.bar1 .combo span { font-size: 10.3px; letter-spacing: -.2px; }
.bar2 .more + .grip { margin-left: 2px; }
.lbl { padding-left: 2px; letter-spacing: -.15px; }
.l1 { width: 49px; } .l2 { width: 61.5px; }

.work { height: 568px; flex: none; display: flex; }
.toc { width: 187px; display: flex; flex-direction: column; }
.phead { height: 17px; flex: none; display: flex; align-items: center; padding: 0 3px 0 4px; background: linear-gradient(90deg, #c5daec, #dce4ec); gap: 5px; color: #333; }
.phead span { flex: 1; }
.toc .phead span { letter-spacing: -.15px; }
.phead svg { width: 10px; height: 10px; margin-bottom: 2px; }
.ptools { height: 25px; flex: none; background: #fbfbfb; display: flex; align-items: center; padding: 0 0 2px 4px; }
.list { flex: 1; background: #fff; border: 1px solid #8d8d8d; padding-top: 1px; margin-bottom: 1px; }
.root { display: flex; align-items: center; height: 16px; padding-left: 7px; gap: 5px; }
.pm { width: 9px; height: 9px; border: 1px solid #9b9b9b; background: linear-gradient(#4b5f86, #4b5f86) center / 5px 1px no-repeat, #fafafa; }
.pm.plus { background: linear-gradient(#4b5f86, #4b5f86) center / 5px 1px no-repeat, linear-gradient(#4b5f86, #4b5f86) center / 1px 5px no-repeat, #fafafa; }
.pm.none { visibility: hidden; }
.ly { height: 33.75px; }
.ly p { height: 17px; display: flex; align-items: center; padding-left: 25px; letter-spacing: -.05px; }
.cb { width: 11px; height: 11px; border: 1px solid #222; margin: 0 7px 0 7px; background: #fff; display: flex; justify-content: center; }
.cb::after { content: ""; width: 4px; height: 7px; border: solid #000; border-width: 0 1.900px 1.900px 0; transform: rotate(40deg); }
.ly > svg { width: 60px; height: 17px; margin: -1px 0 0 38px; }
.one { color: #777; margin-left: 3px; }

.map { width: 780px; margin-left: 5px; display: flex; flex-direction: column; }
.canvas { width: 776px; height: 551px; border-left: 2px solid #777; border-top: 1px solid #777; background: #fff; }
.hbar { height: 15px; display: flex; align-items: center; padding-left: 1px; background: #efefef; width: 776px; }
.hbar b { width: 16px; height: 13px; }
.hbar .on { background: #bcd9f4; border-color: #a3c9eb; }
.hbar svg { width: 10px; height: 10px; }
.hbar .thumb { width: 457px; height: 13px; background: #cdcdcd; margin-left: 32px; }

.cat { width: 286px; display: flex; flex-direction: column; }
.cat .phead { background: linear-gradient(90deg, #9bb9dc, #b9cde7); padding: 0 4px 0 2px; }
.side { transform: rotate(90deg); }
.cat .ptools b { width: 21.5px; }
.cat .ptools { padding-left: 1px; }
.cat .ptools .dd { width: 13px; }
.cat .ptools .dd.mid { width: 11.5px; }
.cat .ptools .sep { width: 8.200px; }
.path { height: 22px; flex: none; display: flex; align-items: center; padding-left: 1px; }
.path > span { width: 48px; }
.path .combo { width: 236px; height: 19px; gap: 3px; }
.path .combo span { flex: 1; }
.tree { height: 498px; width: 286px; border: 1px solid #777; border-width: 1px 0 1px 1px; background: #fff; display: grid; grid-template: 481px 15px / 267px 18px; }
.rows { grid-area: 1 / 1; width: 267px; overflow: hidden; padding-top: 1px; }
.rows p { height: 15.93px; display: flex; align-items: center; gap: 5px; }
.rows svg { width: 16px; height: 16px; }
.d0 { padding-left: 6px; } .d1 { padding-left: 24px; } .d2 { padding-left: 42px; } .d3 { padding-left: 73px; }
.rows .d0, .rows .d1 { letter-spacing: -.06px; }
.cur { background: #f0f0f0; }
.vs { grid-area: 1 / 2; background: #f0f0f0; display: flex; flex-direction: column; align-items: center; width: 14px; padding: 4px 0 3px; }
.vs svg, .hs svg { width: 9px; height: 9px; }
.vs i { width: 14px; height: 337px; background: #cdcdcd; margin-top: 3px; }
.vs .dn { margin-top: auto; }
.up { transform: rotate(180deg); }
.hs { grid-area: 2 / 1 / 3 / 3; background: #f0f0f0; display: flex; align-items: center; padding-left: 3px; }
.hs i { width: 179px; height: 14px; background: #cdcdcd; margin: 0 58px 0 4px; }
.lf { transform: rotate(90deg); } .rt { transform: rotate(-90deg); }
.tabs { flex: 1; background: #f8f8f8; padding: 1px 0 0 3px; }
.tabs div { border: 1px solid #a8a8a8; border-radius: 3px 0 0 3px; background: #f0f0f0; width: 19px; display: flex; flex-direction: column; align-items: center; padding-top: 3px; gap: 3px; color: #666; margin-bottom: 1px; }
.tabs svg { width: 15px; height: 15px; }
.tabs span { writing-mode: vertical-rl; line-height: 15px; }
.t1 { height: 68px; } .t2 { height: 58px; }
.status { height: 20px; flex: none; padding: 3px 0 0 1043px; color: #111; letter-spacing: -.33px; }

.task { height: 37px; flex: none; background: linear-gradient(90deg, #35312d, #403932 27%, #342d28 55%, #302b27); color: #fff; display: flex; align-items: stretch; font-size: 11.3px; }
.start { width: 45px; display: flex; align-items: center; justify-content: center; }
.start svg { width: 15px; height: 15px; }
.find { width: 270px; background: #f2f2f2; color: #333; display: flex; align-items: center; padding-left: 11px; font-size: 13.7px; }
.mag { width: 16px; height: 16px; margin-right: 10px; }
.art { width: 76px; height: 37px; margin-left: auto; }
.ic { display: flex; align-items: center; justify-content: center; }
.ic svg { width: 22px; height: 22px; }
.w1 { width: 45px; } .ic.w1 svg { width: 16px; height: 16px; }
.w2 { width: 41px; } .w3 { width: 39.1px; }
.app { display: flex; align-items: center; gap: 4px; border-bottom: 2px solid #76b9ed; position: relative; padding-left: 1px; }
.app span { letter-spacing: -.15px; }
.app svg { width: 24px; height: 24px; }
.app em { position: absolute; left: 12px; top: 14px; width: 14px; height: 14px; border-radius: 50%; background: #f4572b; font: 9px/14px "Open Sans", sans-serif; text-align: center; }
.a1 { width: 67px; margin-left: 3.500px; } .a2 { width: 67px; margin-left: 9px; }
.a3 { width: 75px; margin-left: 5px; padding-left: 5px; background: #69635d; } .a4 { width: 68px; margin-left: 4px; }
.tray { margin-left: auto; display: flex; align-items: center; }
.tray > svg { width: 16px; height: 16px; }
.tray .cloud { width: 25px; height: 21px; margin-right: 6px; }
.deg { width: 40px; font-size: 12px; }
.tray .k1 { margin-right: 7px; } .tray .k2 { margin-right: 6px; } .tray .k3 { margin-right: 7px; } .tray .k4 { margin-right: 7px; } .tray .k5 { margin-right: 6px; } .tray .k6 { margin-right: 8px; }
.lang { width: 32px; font-size: 11px; }
.clock { width: 54px; display: flex; flex-direction: column; align-items: center; line-height: 16px; font-size: 10.7px; letter-spacing: -.25px; }
.note { width: 24px; margin-left: 15px; position: relative; }
.note svg { width: 24px; height: 24px; }
.note em { position: absolute; left: 13px; top: 9px; font: 10px/15px "Open Sans", sans-serif; }
.peek { width: 1px; height: 37px; background: #777; margin: 0 4px 0 11px; }
.activate { position: absolute; left: 944px; top: 592px; color: rgba(115, 115, 115, .55); font-size: 12.950px; line-height: 19.500px; }
.activate div { font-size: 17.700px; line-height: 22px; }
```
